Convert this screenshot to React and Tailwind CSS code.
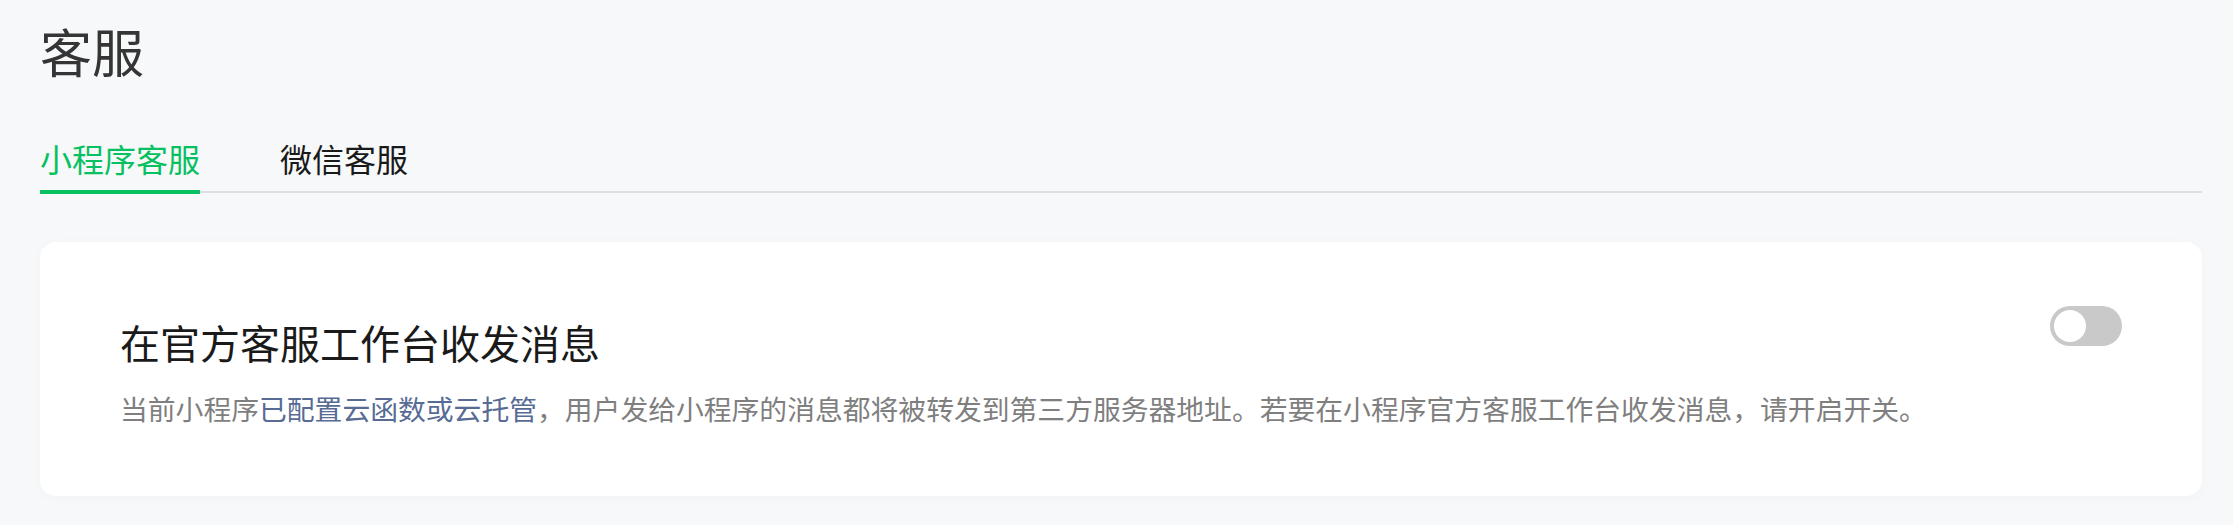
import React, { useState } from 'react';

const FONT = '"Noto Sans CJK SC", "Noto Sans", sans-serif';

function Toggle({ on, onChange }) {
  return (
    <button
      onClick={() => onChange(!on)}
      className={`flex h-[40px] w-[72px] shrink-0 items-center rounded-full p-[4px] ${
        on ? 'bg-[#07c160] justify-end' : 'bg-[#c9c9c9] justify-start'
      }`}
    >
      <span className="block h-[32px] w-[32px] rounded-full bg-white" />
    </button>
  );
}

export default function App() {
  const [tab, setTab] = useState('mp'); // 'mp' | 'wx'
  const [on, setOn] = useState(false);

  const tabs = [
    { id: 'mp', label: '小程序客服' },
    { id: 'wx', label: '微信客服' },
  ];

  return (
    <div
      className="min-h-screen w-full bg-[#f7f8fa] pl-[40px] pr-[31px] pt-[25px]"
      style={{ fontFamily: FONT }}
    >
      <h1 className="text-[52px] leading-[52px] font-normal text-[#353535]">客服</h1>

      {/* Tabs */}
      <div className="mt-[65px] flex gap-[80px] border-b-2 border-[#dedfe2]">
        {tabs.map((t) => (
          <button
            key={t.id}
            onClick={() => setTab(t.id)}
            className={`-mb-[3px] border-b-4 pb-[16px] text-[32px] leading-[32px] ${
              tab === t.id
                ? 'border-[#07c160] text-[#07c160]'
                : 'border-transparent text-[#1a1a1a]'
            }`}
          >
            {t.label}
          </button>
        ))}
      </div>

      {/* Card */}
      <div className="mt-[49px] flex items-start justify-between rounded-[16px] bg-white pb-[74px] pl-[80px] pr-[80px] pt-[64px] shadow-[0_2px_14px_rgba(0,0,0,0.025)]">
        <div className="pt-[16px]">
          <div className="text-[40px] leading-[40px] text-[#1a1a1a]">在官方客服工作台收发消息</div>
          <p className="mt-[32px] text-[27.8px] leading-[28px] text-[#7f7f7f]">
            当前小程序<span className="text-[#576b95]">已配置云函数或云托管</span>
            ，用户发给小程序的消息都将被转发到第三方服务器地址。若要在小程序官方客服工作台收发消息，请开启开关。
          </p>
        </div>
        <Toggle on={on} onChange={setOn} />
      </div>
    </div>
  );
}
